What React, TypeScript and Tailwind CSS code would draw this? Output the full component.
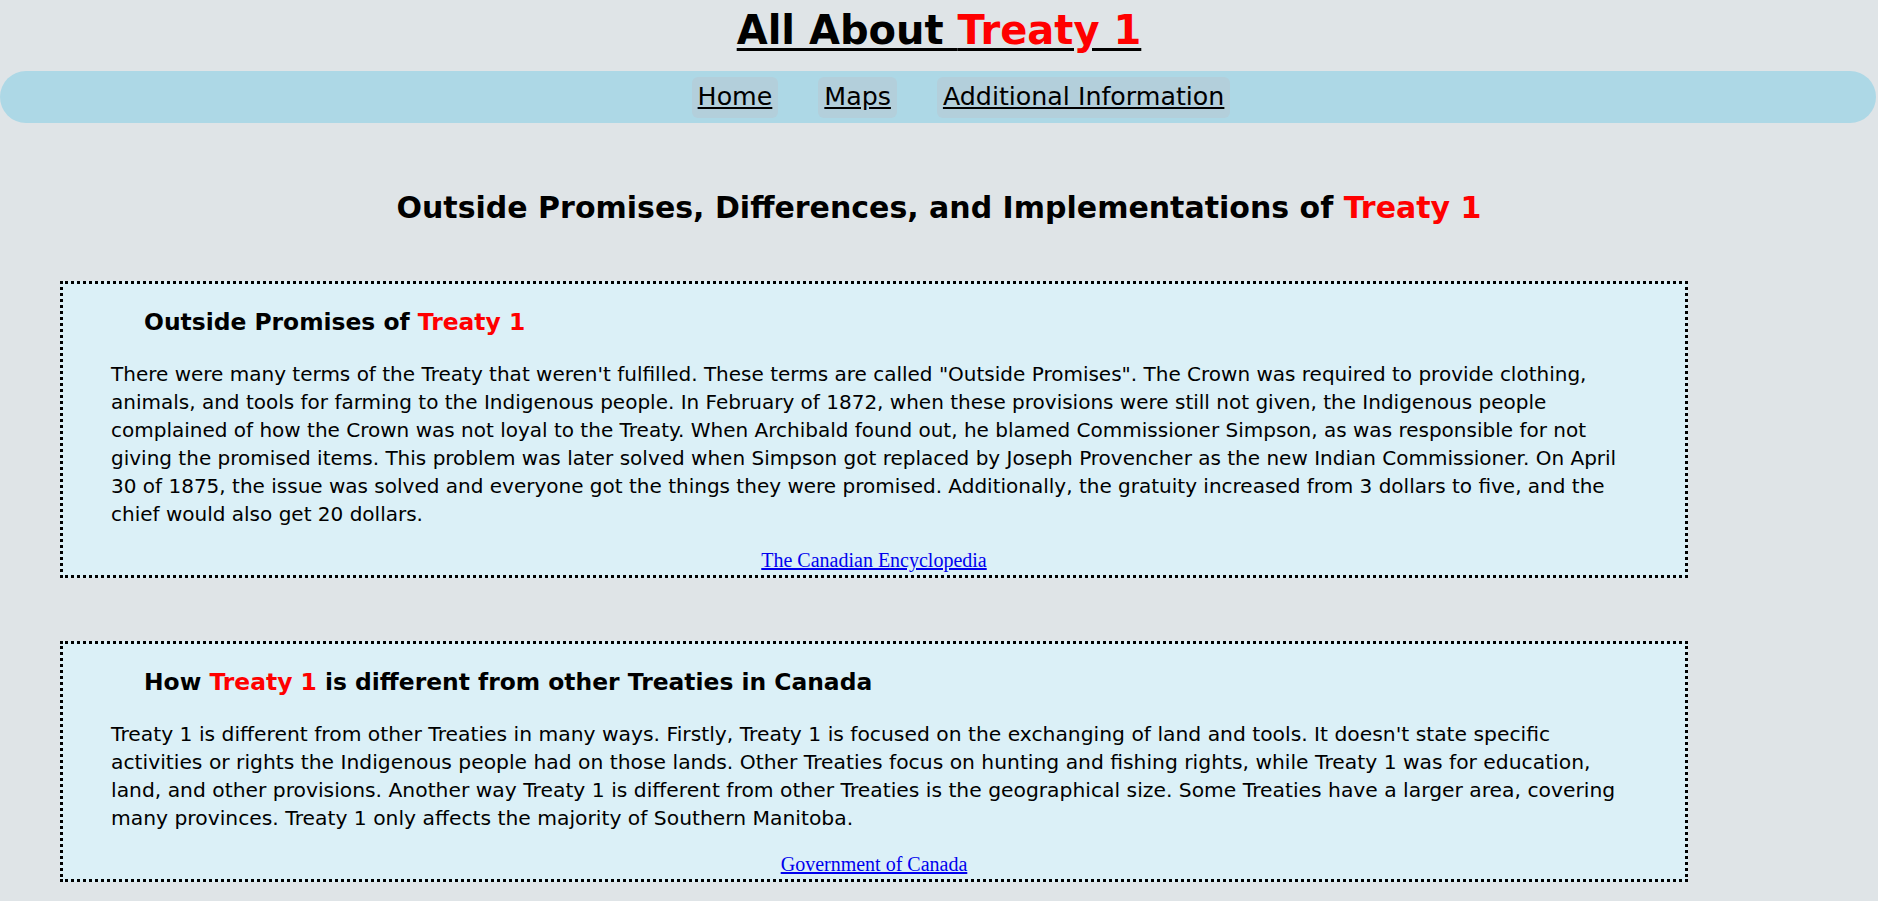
import React from "react";

const Red = ({ children }: { children: React.ReactNode }) => (
  <span className="text-[#ff0000]">{children}</span>
);

function Box({
  title,
  text,
  link,
  pClass,
}: {
  title: React.ReactNode;
  text: string;
  link: string;
  pClass: string;
}) {
  return (
    <section className="ml-[60px] w-[1628px] border-[3px] border-dotted border-black bg-[#dbf0f7] px-[48px] pt-[2px] pb-[3px]">
      <h3 className="mt-[23px] ml-[33px] text-[23.4px] font-bold leading-[27px]">{title}</h3>
      <p className={pClass}>{text}</p>
      <div className="text-center font-['Liberation_Serif',serif] text-[20px] leading-[24px]">
        <a href="#" className="text-[#0000ee] underline">
          {link}
        </a>
      </div>
    </section>
  );
}

export default function App() {
  return (
    <div className="min-h-screen bg-[#dfe4e7] pb-[20px] font-['DejaVu_Sans',Verdana,sans-serif] text-black">
      <h1 className="pt-0 text-center text-[40px] font-bold leading-normal">
        <span className="underline decoration-[3px] underline-offset-[4px]">
          All About <Red>Treaty 1</Red>
        </span>
      </h1>
      <nav className="mt-[11px] flex h-[52px] w-[1876px] items-center justify-center gap-[40px] rounded-[26px] bg-[#add8e6] pl-[46px]">
        {["Home", "Maps", "Additional Information"].map((t) => (
          <a
            key={t}
            href="#"
            className="flex h-[41px] items-center rounded-[6px] bg-[#b3cfdb] px-[6px] text-[25.3px] leading-normal text-black underline"
          >
            {t}
          </a>
        ))}
      </nav>
      <h2 className="mt-[62px] text-center text-[30px] font-bold leading-normal">
        Outside Promises, Differences, and Implementations of <Red>Treaty 1</Red>
      </h2>
      <div className="mt-[51px]">
        <Box
          title={
            <>
              Outside Promises of <Red>Treaty 1</Red>
            </>
          }
          pClass="mt-[24px] mb-[20px] text-[20px] leading-[28px]"
          text={`There were many terms of the Treaty that weren't fulfilled. These terms are called "Outside Promises". The Crown was required to provide clothing, animals, and tools for farming to the Indigenous people. In February of 1872, when these provisions were still not given, the Indigenous people complained of how the Crown was not loyal to the Treaty. When Archibald found out, he blamed Commissioner Simpson, as was responsible for not giving the promised items. This problem was later solved when Simpson got replaced by Joseph Provencher as the new Indian Commissioner. On April 30 of 1875, the issue was solved and everyone got the things they were promised. Additionally, the gratuity increased from 3 dollars to five, and the chief would also get 20 dollars.`}
          link="The Canadian Encyclopedia"
        />
      </div>
      <div className="mt-[63px]">
        <Box
          title={
            <>
              How <Red>Treaty 1</Red> is different from other Treaties in Canada
            </>
          }
          pClass="mt-[24px] mb-[20px] text-[20.3px] leading-[28px]"
          text={`Treaty 1 is different from other Treaties in many ways. Firstly, Treaty 1 is focused on the exchanging of land and tools. It doesn't state specific activities or rights the Indigenous people had on those lands. Other Treaties focus on hunting and fishing rights, while Treaty 1 was for education, land, and other provisions. Another way Treaty 1 is different from other Treaties is the geographical size. Some Treaties have a larger area, covering many provinces. Treaty 1 only affects the majority of Southern Manitoba.`}
          link="Government of Canada"
        />
      </div>
    </div>
  );
}
